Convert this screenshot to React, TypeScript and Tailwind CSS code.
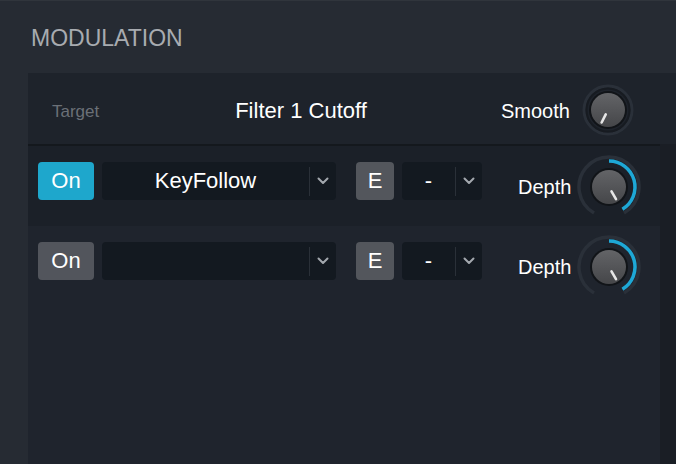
import React from "react";

function Chevron() {
  return (
    <svg width="12" height="8" viewBox="0 0 12 8">
      <path d="M1.5 1.5 L6 6 L10.5 1.5" fill="none" stroke="#a3a8ae" strokeWidth="2" strokeLinecap="round" strokeLinejoin="round" />
    </svg>
  );
}

function Dropdown({ label, width }: { label: string; width: string }) {
  return (
    <div className={`flex h-[38px] items-center rounded-[4px] bg-[#131920] ${width}`}>
      <div className="flex-1 text-center text-[22px] leading-none text-white">{label}</div>
      <div className="h-[29px] w-px bg-[#2a3038]" />
      <div className="flex w-[26px] justify-center">
        <Chevron />
      </div>
    </div>
  );
}

function pt(cx: number, cy: number, r: number, deg: number) {
  const a = ((deg - 90) * Math.PI) / 180;
  return [cx + r * Math.cos(a), cy + r * Math.sin(a)];
}

function arc(cx: number, cy: number, r: number, a0: number, a1: number) {
  const [x0, y0] = pt(cx, cy, r, a0);
  const [x1, y1] = pt(cx, cy, r, a1);
  const large = a1 - a0 > 180 ? 1 : 0;
  return `M ${x0} ${y0} A ${r} ${r} 0 ${large} 1 ${x1} ${y1}`;
}

function KnobBody({ cx, cy, angle, id }: { cx: number; cy: number; angle: number; id: string }) {
  const [x0, y0] = pt(cx, cy, 5, angle);
  const [x1, y1] = pt(cx, cy, 14, angle);
  return (
    <g>
      <defs>
        <linearGradient id={id} x1="0" y1="0" x2="0" y2="1">
          <stop offset="0" stopColor="#636467" />
          <stop offset="1" stopColor="#454649" />
        </linearGradient>
      </defs>
      <circle cx={cx} cy={cy} r={19} fill="#111418" />
      <circle cx={cx} cy={cy} r={17} fill={`url(#${id})`} />
      <line x1={x0} y1={y0} x2={x1} y2={y1} stroke="#e6e6e6" strokeWidth="2.6" strokeLinecap="round" />
    </g>
  );
}

function SmoothKnob() {
  return (
    <svg width="52" height="52" viewBox="0 0 52 52">
      <circle cx="26" cy="26" r="24" fill="none" stroke="#2a3039" strokeWidth="3" />
      <circle cx="26" cy="26" r="21.5" fill="none" stroke="#171b21" strokeWidth="2" />
      <KnobBody cx={26} cy={26} angle={207} id="gs" />
    </svg>
  );
}

function DepthKnob({ id }: { id: string }) {
  return (
    <svg width="66" height="66" viewBox="0 0 66 66">
      <path d={arc(33, 33, 30, -150, 150)} fill="none" stroke="#2a3039" strokeWidth="3.5" />
      <path d={arc(33, 33, 26, 0, 149)} fill="none" stroke="#1ea8d6" strokeWidth="3.5" />
      <KnobBody cx={33} cy={33} angle={150} id={id} />
    </svg>
  );
}

function Row({ active, label, bg, id }: { active: boolean; label: string; bg: string; id: string }) {
  return (
    <div className={`flex h-[80px] items-start pl-[10px] pt-[16px] ${bg}`}>
      <div
        className={`flex h-[38px] w-[56px] items-center justify-center rounded-[4px] text-[22px] leading-none text-white ${
          active ? "bg-[#1ea7cc]" : "bg-[#52555c]"
        }`}
      >
        On
      </div>
      <div className="ml-[8px]">
        <Dropdown label={label} width="w-[234px]" />
      </div>
      <div className="ml-[20px] flex h-[38px] w-[38px] items-center justify-center rounded-[4px] bg-[#53565c] text-[22px] leading-none text-white">
        E
      </div>
      <div className="ml-[8px]">
        <Dropdown label="-" width="w-[80px]" />
      </div>
      <div className="-mt-[8px] ml-[36px] flex h-[66px] items-center">
        <span className="text-[20px] leading-none text-white">Depth</span>
        <div className="ml-[5px]">
          <DepthKnob id={id} />
        </div>
      </div>
    </div>
  );
}

export default function App() {
  return (
    <div className="flex h-[464px] w-[676px] flex-col overflow-hidden border-t border-[#30353c] bg-[#262b33] font-['Liberation_Sans',Arial,sans-serif]">
      <div className="h-[72px] pl-[31px] pt-[26px]">
        <div className="text-[23px] leading-none text-[#a8abb0]">MODULATION</div>
      </div>
      <div className="ml-[28px] flex flex-1 flex-col">
        <div className="flex h-[71px] items-center bg-[#1e232b] pl-[24px] pt-[5px]">
          <div className="w-[150px] text-[17px] leading-none text-[#6b7077]">Target</div>
          <div className="w-[198px] text-center text-[22px] leading-none text-white">Filter 1 Cutoff</div>
          <div className="ml-[101px] text-[20px] leading-none text-white">Smooth</div>
          <div className="ml-[12px] mt-[-2px]">
            <SmoothKnob />
          </div>
        </div>
        <div className="flex flex-1">
          <div className="flex w-[632px] flex-col bg-[#1f242d]">
            <div className="h-[2px] bg-[#14181d]" />
            <Row active label="KeyFollow" bg="bg-[#1b2028]" id="g1" />
            <Row active={false} label="" bg="bg-[#1f242d]" id="g2" />
          </div>
          <div className="flex-1 bg-[#1a1e25]" />
        </div>
      </div>
    </div>
  );
}
